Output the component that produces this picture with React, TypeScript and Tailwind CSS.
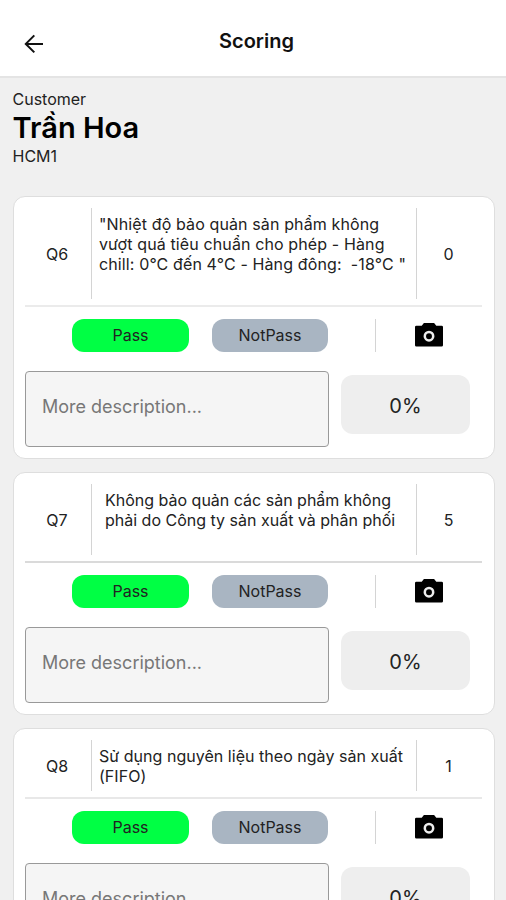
import { useState } from 'react'

type Result = 'pass' | 'notPass'

interface Question {
  code: string
  text: string
  point: number
  textClass: string
  divider: string
}

const QUESTIONS: Question[] = [
  {
    code: 'Q6',
    text: '"Nhiệt độ bảo quản sản phẩm không\nvượt quá tiêu chuẩn cho phép - Hàng\nchill: 0°C đến 4°C - Hàng đông:  -18°C "\n ',
    point: 0,
    textClass: 'pl-[7px] tracking-[0.12px]',
    divider: 'bg-[#ebebeb]',
  },
  {
    code: 'Q7',
    text: 'Không bảo quản các sản phẩm không\nphải do Công ty sản xuất và phân phối\n ',
    point: 5,
    textClass: 'pl-[13px]',
    divider: 'bg-[#dadada]',
  },
  {
    code: 'Q8',
    text: 'Sử dụng nguyên liệu theo ngày sản xuất\n(FIFO)',
    point: 1,
    textClass: 'pl-[7px] tracking-[0.03px]',
    divider: 'bg-[#e8e8e8]',
  },
]

function BackIcon() {
  return (
    <svg width="20" height="20" viewBox="0 0 20 20" fill="none" stroke="#111" strokeWidth="2">
      <path d="M10.3 1.4 1.8 9.9l8.5 8.5M2 9.9h17" />
    </svg>
  )
}

function CameraIcon() {
  return (
    <svg width="28" height="24" viewBox="0 0 28 24">
      <path d="M8.9 0h10.2l2.2 2.7H26.6Q28 2.7 28 4.1V22.2Q28 23.6 26.6 23.6H1.4Q0 23.6 0 22.2V4.1Q0 2.7 1.4 2.7H6.7z" fill="#000" />
      <circle cx="14" cy="13.2" r="4.2" fill="none" stroke="#eee" strokeWidth="2.5" />
    </svg>
  )
}

function QuestionCard({ question }: { question: Question }) {
  const [result, setResult] = useState<Result | null>(null)
  const [description, setDescription] = useState('')

  return (
    <section className="rounded-xl border border-[#dedede] bg-white py-[11px] pr-3 pl-[11px]">
      <div className="flex">
        <div className="flex w-[67px] items-center justify-center border-r border-[#d4d4d4] pr-0.5 text-base">{question.code}</div>
        <p className={`flex-1 whitespace-pre pt-1.5 pb-[5px] text-base leading-5 ${question.textClass}`}>{question.text}</p>
        <div className="flex w-[66px] items-center justify-center border-l border-[#d4d4d4] pr-0.5 text-base">{question.point}</div>
      </div>
      <div className={`mt-1.5 h-0.5 ${question.divider}`} />
      <div className="mt-3 flex h-[33px] items-center pl-[47px]">
        <button onClick={() => setResult('pass')} aria-pressed={result === 'pass'} className="h-full w-[117px] rounded-xl bg-[#00ff44] pb-0.5 text-base">Pass</button>
        <button onClick={() => setResult('notPass')} aria-pressed={result === 'notPass'} className="ml-[23px] h-full w-[116px] rounded-xl bg-[#a9b5c2] pb-0.5 text-base">NotPass</button>
        <div className="ml-[47px] h-full w-px bg-[#d4d4d4]" />
        <button className="mb-px ml-[39px]"><CameraIcon /></button>
      </div>
      <div className="mt-[19px] flex">
        <textarea
          value={description}
          onChange={e => setDescription(e.target.value)}
          placeholder="More description..."
          className="h-[76px] w-[304px] resize-none overflow-hidden rounded border border-[#999] bg-[#f5f5f5] px-4 py-[23px] text-lg leading-6 placeholder:text-[#777]"
        />
        <div className="mt-1 ml-3 flex h-[59px] w-[129px] items-center justify-center rounded-xl bg-[#eee] pt-0.5 text-xl">0%</div>
      </div>
    </section>
  )
}

export default function App() {
  return (
    <div className="h-[900px] w-[506px] overflow-hidden bg-[#f0f0f0] font-['Inter',sans-serif] text-[#222]">
      <header className="flex h-[78px] items-center border-b-2 border-[#e4e4e4] bg-white">
        <button className="mt-3 ml-6"><BackIcon /></button>
        <h1 className="mt-1.5 ml-[175px] text-xl font-semibold text-[#111]">Scoring</h1>
      </header>
      <div className="h-[118px] px-[12.5px] pt-[11px]">
        <p className="text-base leading-5">Customer</p>
        <p className="pt-px text-[29px] leading-9 font-semibold text-black">Trần Hoa</p>
        <p className="text-base leading-5">HCM1</p>
      </div>
      <main className="flex flex-col gap-[13px] pr-[11px] pl-[13px]">
        {QUESTIONS.map(q => <QuestionCard key={q.code} question={q} />)}
      </main>
    </div>
  )
}
